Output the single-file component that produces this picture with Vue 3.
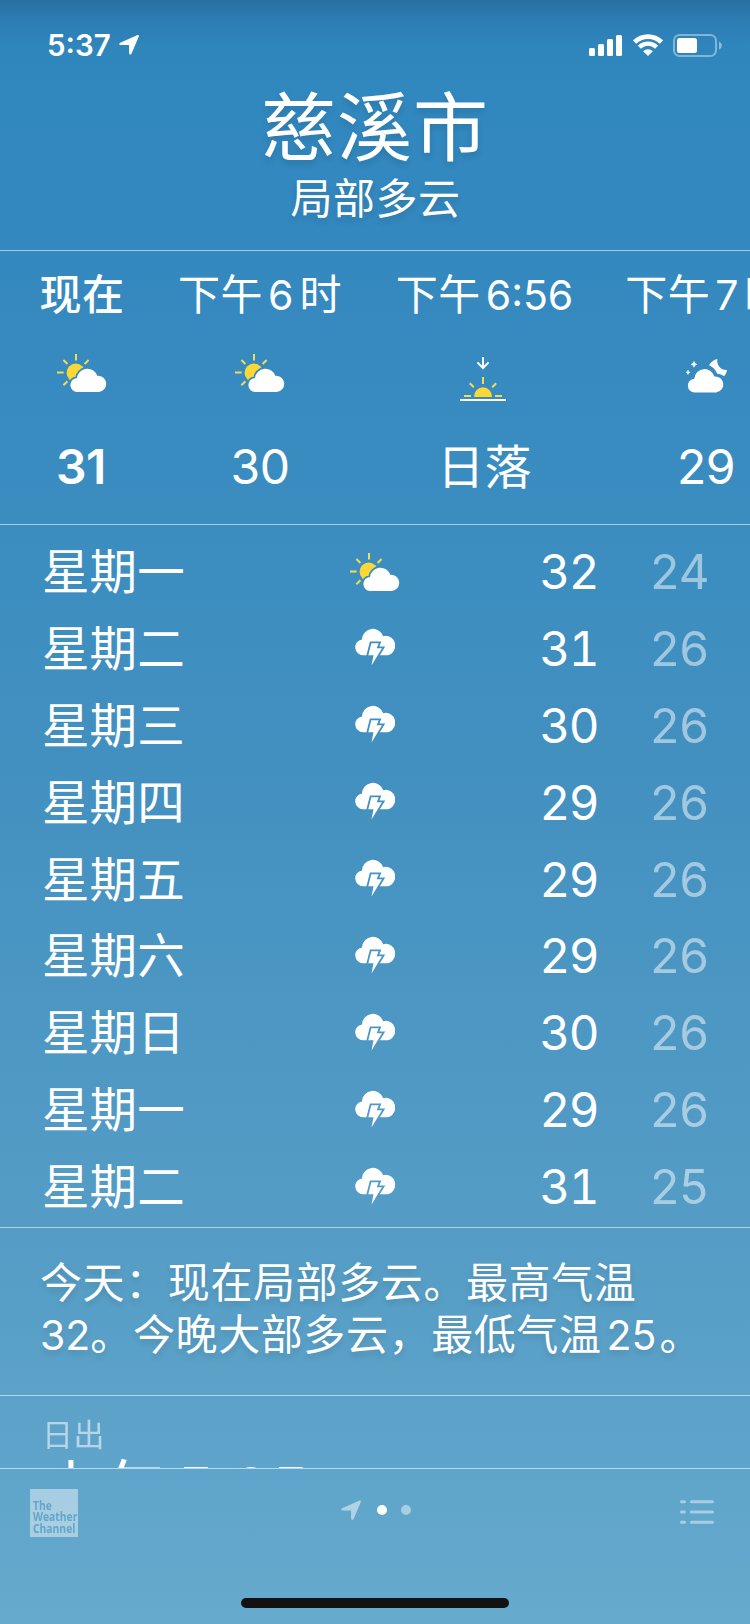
<template>
  <div class="weather">
    <!-- shared icons -->
    <svg class="sprite" width="0" height="0">
      <defs>
        <mask id="cut-cloud" maskUnits="userSpaceOnUse" x="0" y="0" width="50" height="38">
          <rect width="50" height="38" fill="#fff" />
          <path d="M20.7 38a7 7 0 0 1-.7-14a10.4 10.4 0 0 1 20.2-2.2a8.1 8.1 0 1 1 1.7 16.2z" fill="#000" stroke="#000" stroke-width="3.6" />
        </mask>
        <mask id="cut-bolt" maskUnits="userSpaceOnUse" x="0" y="0" width="40" height="39">
          <rect width="40" height="39" fill="#fff" />
          <path d="M16.3 16.3h7.4l-2 4.9h5.3L16.5 38.5l2-10.2h-5.2z" fill="#000" stroke="#000" stroke-width="3.6" />
        </mask>
      </defs>
      <symbol id="partly" viewBox="0 0 50 38">
        <g mask="url(#cut-cloud)">
          <circle cx="18.8" cy="18.7" r="9.2" fill="#fdd835" />
        </g>
        <path d="M19 0v6.4M0 18.6h6.6M6.4 6l4 4M31.6 6l-4 4M6.4 31.2l4-4" stroke="#f2dc55" stroke-width="2" fill="none" />
        <path d="M20.7 38a7 7 0 0 1-.7-14a10.4 10.4 0 0 1 20.2-2.2a8.1 8.1 0 1 1 1.7 16.2z" fill="#fff" />
      </symbol>
      <symbol id="storm" viewBox="0 0 40 39">
        <path mask="url(#cut-bolt)" d="M8 28.3a8 8 0 0 1-1-15.9a10.9 10.9 0 0 1 21.2-3.2a9.7 9.7 0 1 1 2.2 19.1z" fill="#fff" />
        <path d="M16.3 16.3h7.4l-2 4.9h5.3L16.5 38.5l2-10.2h-5.2z" fill="#fff" />
      </symbol>
      <symbol id="sunset" viewBox="0 0 46 44">
        <path d="M23 0v11M17.4 5.4L23 11l5.6-5.6M0 43h46" stroke="#fff" stroke-width="2" fill="none" />
        <path d="M14 40a9 9.8 0 0 1 18 0z" fill="#fdd835" />
        <path d="M23 20v7M9.8 26.3l4 4M36.2 26.3l-4 4M4 39h7M35 39h7" stroke="#f2dc55" stroke-width="2" fill="none" />
      </symbol>
      <symbol id="night" viewBox="0 0 41 34">
        <path d="M9 33.4a6.8 6.8 0 0 1-.7-13.6a10.2 10.2 0 0 1 20-2.3a8 8 0 1 1 2 15.9z" fill="#fff" />
        <path d="M31.3 0c-.8 6.3 3.6 11.4 9.7 11c-.4 2.3-1.3 4.3-2.8 6.2c-2.2-1.5-4.4-2.4-7-2.5c-1.5-4-4.4-7-8.2-8.5c2-3.3 4.8-5.4 8.3-6.2z" fill="#fff" />
        <path d="M8 2.4l.9 2 2 .9-2 .9-.9 2-.9-2-2-.9 2-.9zM2 11.2l.6 1.5 1.5.6-1.5.6L2 15.4l-.6-1.5-1.5-.6 1.5-.6z" fill="#fff" stroke="#fff" stroke-width=".6" />
      </symbol>
      <symbol id="arrow" viewBox="0 0 20 20">
        <path d="M18.6.1q1.600-.3 1.200 1.300L12.600 18.600q-1.800 2.300-2.500-.3V10.400q-.1-.5-.6-.5H1.500q-2.600-.6-.3-2.200z" fill="#fff" />
      </symbol>
    </svg>

    <div class="status-bar">
      <span class="clock">5:37</span>
      <svg class="loc" width="20" height="20"><use href="#arrow" /></svg>
      <svg class="signal" width="34" height="21" viewBox="0 0 34 21" fill="#fff">
        <rect x="0" y="13" width="6" height="8" rx="1.5" />
        <rect x="9" y="9" width="6" height="12" rx="1.5" />
        <rect x="18" y="4" width="6" height="17" rx="1.5" />
        <rect x="27" y="0" width="6" height="21" rx="1.5" />
      </svg>
      <svg class="wifi" width="30" height="22" viewBox="0 0 30 22" fill="none" stroke="#fff">
        <path d="M1.5 8.1a19.3 19.3 0 0 1 27 0" stroke-width="4.8" />
        <path d="M6.4 13.2a12.2 12.2 0 0 1 17.2 0" stroke-width="4.4" />
        <path d="M15 22l-4.9-4.7a7 7 0 0 1 9.8 0z" fill="#fff" stroke="none" />
      </svg>
      <svg class="battery" width="49" height="23" viewBox="0 0 49 23">
        <rect x="1" y="1" width="42" height="21" rx="5.5" fill="none" stroke="#fff" stroke-opacity=".4" stroke-width="2" />
        <rect x="4" y="4" width="20" height="15" rx="2.5" fill="#fff" />
        <path d="M46 7.5q3 1.5 3 4t-3 4z" fill="#fff" fill-opacity=".45" />
      </svg>
    </div>

    <header class="city">
      <h1>慈溪市</h1>
      <p>局部多云</p>
    </header>

    <section class="hourly">
      <div v-for="(h, i) in hours" :key="i" class="hour" :class="{ now: i === 0 }">
        <span class="time">{{ h.period }}<span v-if="h.clock" class="clock-num">{{ h.clock }}</span>{{ h.unit }}</span>
        <div class="icon-box">
          <svg :width="sizes[h.icon][0]" :height="sizes[h.icon][1]" :class="h.icon"><use :href="'#' + h.icon" /></svg>
        </div>
        <span class="value" :class="{ cjk: h.icon === 'sunset' }">{{ h.value }}</span>
      </div>
    </section>

    <section class="daily">
      <div v-for="(d, i) in days" :key="i" class="day">
        <span class="name">{{ d.name }}</span>
        <div class="day-icon">
          <svg :width="sizes[d.icon][0]" :height="sizes[d.icon][1]"><use :href="'#' + d.icon" /></svg>
        </div>
        <span class="high">{{ d.high }}</span>
        <span class="low">{{ d.low }}</span>
      </div>
    </section>

    <section class="summary">
      <p>今天：现在局部多云。最高气温<br><span class="num">32</span>。今晚大部多云，最低气温<span class="num mid">25</span>。</p>
    </section>

    <section class="details">
      <span class="label">日出</span>
      <span class="sunrise">上午<span class="digits">5:05</span></span>
    </section>

    <footer class="toolbar">
      <div class="logo">
        <div class="logo-text"><span>The</span><span>Weather</span><span>Channel</span></div>
      </div>
      <div class="pages">
        <svg width="20" height="21"><use href="#arrow" /></svg>
        <i class="dot active"></i>
        <i class="dot"></i>
      </div>
      <svg class="list" width="34" height="24" viewBox="0 0 34 24" stroke="#fff" stroke-width="3" stroke-linecap="round">
        <path d="M1.5 1.7h3M1.5 12h3M1.5 22.3h3M11.5 1.7h21M11.5 12h21M11.5 22.3h21" />
      </svg>
    </footer>
    <div class="home-bar"></div>
  </div>
</template>

<script setup>
// [width, height] of every weather icon
const sizes = {
  partly: [50, 38],
  storm: [40, 39],
  sunset: [46, 44],
  night: [41, 34]
}

const hours = [
  { period: '现在', icon: 'partly', value: '31' },
  { period: '下午', clock: '6', unit: '时', icon: 'partly', value: '30' },
  { period: '下午', clock: '6:56', icon: 'sunset', value: '日落' },
  { period: '下午', clock: '7', unit: '时', icon: 'night', value: '29' }
]

const days = [
  { name: '星期一', icon: 'partly', high: 32, low: 24 },
  { name: '星期二', icon: 'storm', high: 31, low: 26 },
  { name: '星期三', icon: 'storm', high: 30, low: 26 },
  { name: '星期四', icon: 'storm', high: 29, low: 26 },
  { name: '星期五', icon: 'storm', high: 29, low: 26 },
  { name: '星期六', icon: 'storm', high: 29, low: 26 },
  { name: '星期日', icon: 'storm', high: 30, low: 26 },
  { name: '星期一', icon: 'storm', high: 29, low: 26 },
  { name: '星期二', icon: 'storm', high: 31, low: 25 }
]
</script>

<style>
body { margin: 0; }
</style>

<style scoped>
.weather {
  display: flex;
  flex-direction: column;
  width: 750px;
  height: 1624px;
  overflow: hidden;
  box-sizing: border-box;
  color: #fff;
  font-family: Inter, "Noto Sans CJK SC", sans-serif;
  background: linear-gradient(#27709f 0, #2c7cb2 18px, #2f86bd 48px, #3188bf 100px, #3388bf 240px, #3b8dc0 520px, #4290c0 760px, #559dc6 1240px, #5fa4ca 1470px, #66aacd 1624px);
}
.sprite { display: block; flex: none; }
h1, p { margin: 0; font-weight: 400; }

.status-bar { display: flex; align-items: center; flex: none; height: 90px; padding: 0 28px 0 47px; }
.clock { width: 64px; font-size: 29.5px; font-weight: 600; line-height: 36px; }
.loc { margin-left: 8px; }
.signal { margin-left: auto; }
.wifi { margin: 0 10.5px 0 9.5px; }

.city { flex: none; height: 160px; border-bottom: 1px solid rgba(255, 255, 255, .55); text-align: center; text-shadow: 0 4px 6px rgba(0, 0, 0, .12); }
.city h1 { font-size: 75px; line-height: 76px; letter-spacing: 1px; }
.city p { margin: 3px -1px 0 0; font-size: 42px; line-height: 60px; letter-spacing: .5px; }

.hourly { display: grid; grid-template-columns: 164px 192px 257px 186px; flex: none; height: 273px; border-bottom: 1px solid rgba(255, 255, 255, .55); }
.hour { display: flex; flex-direction: column; align-items: center; white-space: nowrap; }
.time { margin-top: 20px; font-size: 42px; line-height: 48px; letter-spacing: .5px; }
.clock-num { margin: 0 6px 0 5px; font-size: 41px; letter-spacing: 0; }
.hour:nth-child(3) .clock-num { margin-right: 0; }
.icon-box { display: flex; align-items: center; justify-content: center; height: 92px; margin-top: 13px; }
.icon-box .partly { margin-bottom: 10px; }
.icon-box .sunset { margin: 1px 3px 0 0; }
.icon-box .night { margin-bottom: 5px; }
.value { margin-top: 18px; font-size: 48px; line-height: 50px; letter-spacing: -.5px; }
.value.cjk { font-size: 47px; letter-spacing: .2px; }
.now .time { font-weight: 500; }
.now .value { margin-right: 2px; font-weight: 600; }

.daily { flex: none; box-sizing: border-box; height: 703px; padding-top: 5px; border-bottom: 1px solid rgba(255, 255, 255, .55); }
.day { display: flex; align-items: center; height: 76.9px; padding: 0 42px; font-size: 47.5px; font-variant-numeric: tabular-nums; }
.name { width: 302px; letter-spacing: .1px; }
.day-icon { display: flex; justify-content: center; width: 68px; padding-top: 3px; }
.day:first-child .day-icon { padding-top: 7px; }
.high, .low { padding-top: 6px; letter-spacing: -1.5px; }
.high { width: 111px; margin-left: 131px; }
.low { opacity: .5; }

.summary { flex: none; height: 139px; padding: 28px 40px 0; border-bottom: 1px solid rgba(255, 255, 255, .55); text-shadow: 0 4px 6px rgba(0, 0, 0, .12); }
.summary p { padding-top: 1px; font-size: 42px; line-height: 52px; letter-spacing: .6px; white-space: nowrap; }
.num { font-size: 41px; letter-spacing: 0; }
.mid { margin: 0 3px 0 5px; }

.details { display: flex; flex-direction: column; flex: none; height: 72px; overflow: hidden; padding-left: 42px; }
.label { flex: none; margin-top: 21px; font-size: 31px; line-height: 36px; letter-spacing: .5px; opacity: .55; }
.sunrise { flex: none; margin-top: 7px; font-size: 62px; line-height: 60px; letter-spacing: 2px; }
.digits { margin-left: 6px; letter-spacing: 0; }

.toolbar { display: flex; justify-content: space-between; flex: none; box-sizing: border-box; height: 130px; padding: 20px 36px 0 30px; border-top: 1px solid rgba(255, 255, 255, .55); }
.logo { box-sizing: border-box; width: 48px; height: 48px; padding: 11px 0 0 3px; background: rgba(255, 255, 255, .45); color: #62a6cb; }
.logo-text { display: flex; flex-direction: column; align-items: flex-start; width: 53px; font: 700 12px/11.3px "Open Sans", sans-serif; transform: scaleX(.86); transform-origin: left; }
.pages { display: flex; gap: 14px; height: 42px; align-items: center; margin-right: 6px; }
.pages svg { opacity: .5; margin-right: 2px; }
.dot { width: 10px; height: 10px; border-radius: 50%; background: #fff; opacity: .45; }
.dot.active { opacity: 1; }
.list { margin-top: 11px; opacity: .45; }
.home-bar { flex: none; width: 268px; height: 10px; margin: 0 auto 16px; border-radius: 5px; background: #121212; }
</style>
